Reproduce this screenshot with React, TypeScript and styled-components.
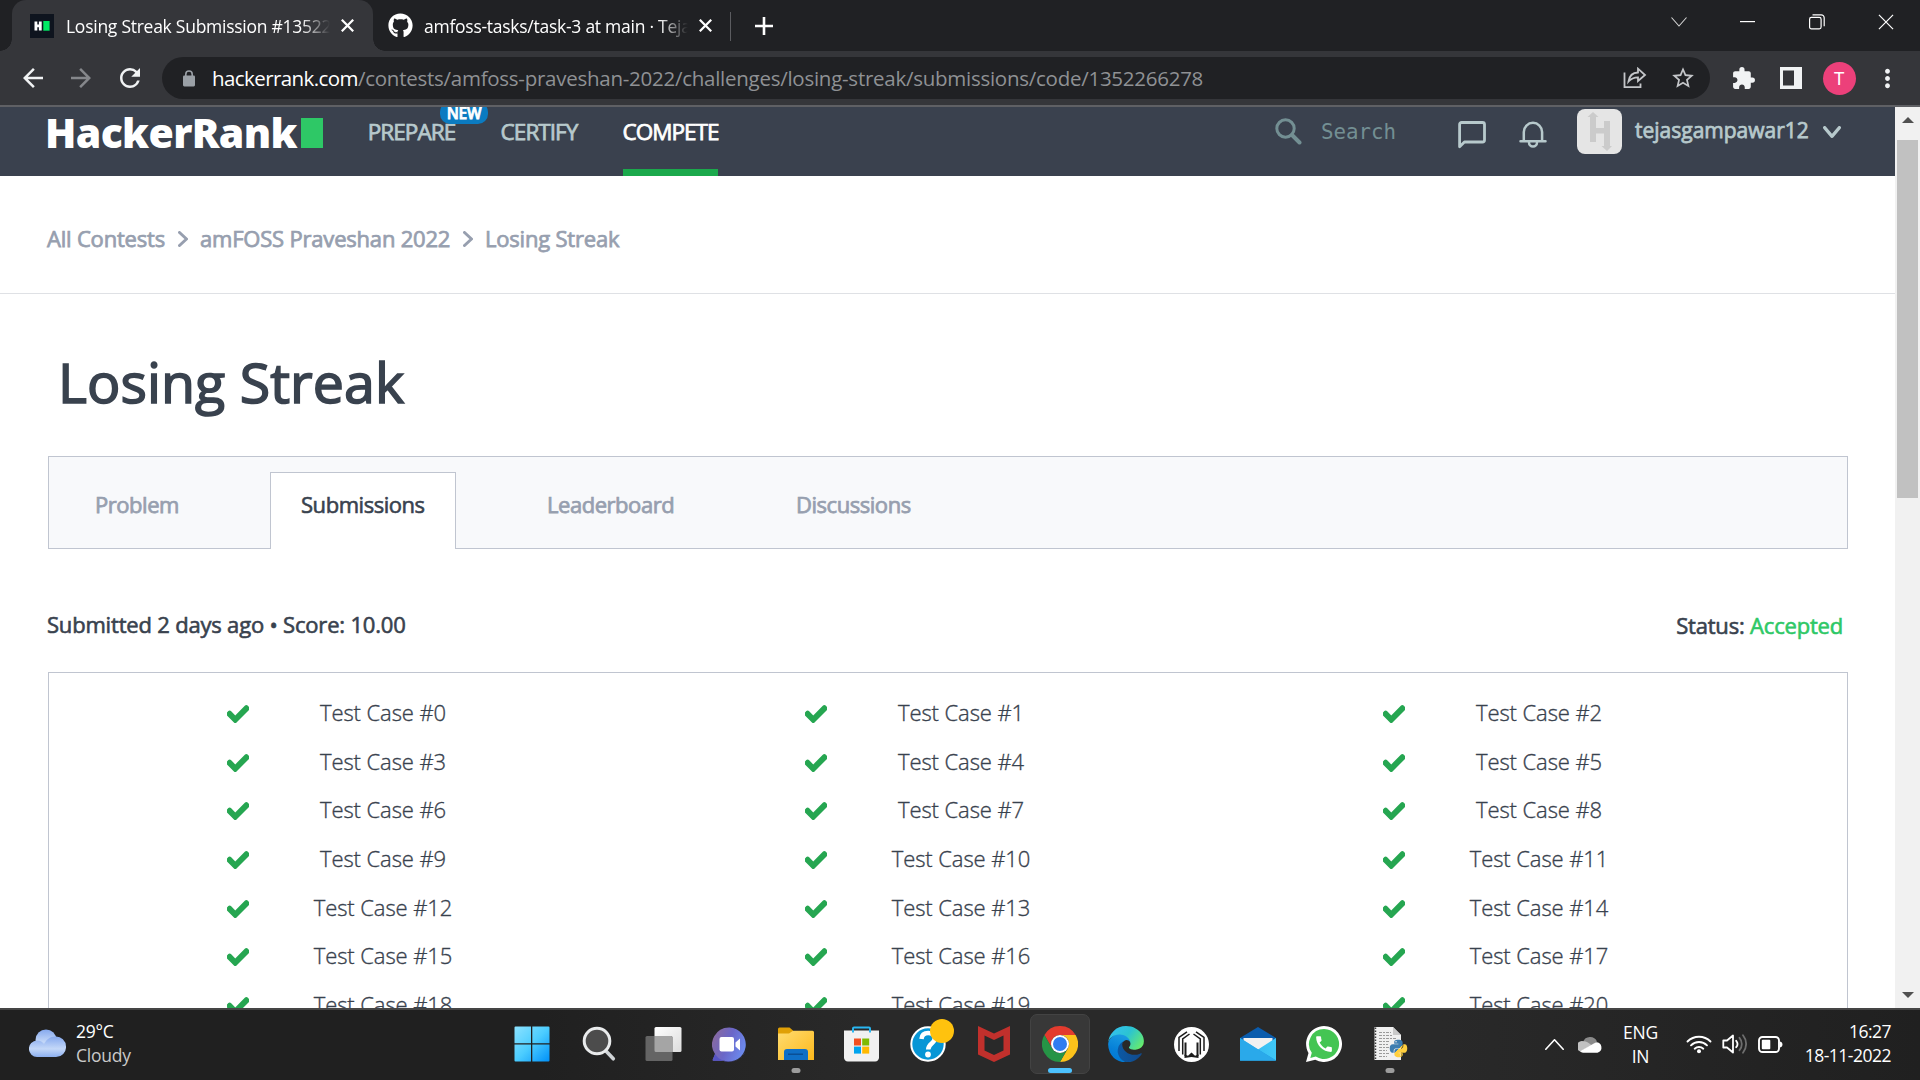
import React from 'react';
import styled, { createGlobalStyle, css } from 'styled-components';
import {
  MdArrowBack,
  MdArrowForward,
  MdCall,
  MdExtension,
  MdMoreVert,
  MdRefresh,
  MdStarBorder,
} from 'react-icons/md';
import { FaCheck, FaGithub, FaPython } from 'react-icons/fa';

const GlobalStyle = createGlobalStyle`
  * { box-sizing: border-box; }
  body {
    margin: 0;
    background: #202124;
    font-family: 'Open Sans', 'Noto Sans', sans-serif;
  }
  svg { display: block; flex: none; }
`;

const center = css`
  display: flex;
  align-items: center;
  justify-content: center;
`;

const Screen = styled.div`
  width: 1920px;
  height: 1080px;
  display: flex;
  flex-direction: column;
  overflow: hidden;
`;

/* ---------- browser chrome ---------- */

const TabStrip = styled.div`
  height: 51px;
  flex: none;
  display: flex;
  background: #202124;
  padding-left: 12px;
`;

const Tab = styled.div<{ $active?: boolean }>`
  position: relative;
  display: flex;
  align-items: center;
  width: ${(p) => (p.$active ? 361 : 357)}px;
  height: 51px;
  padding: 0 0 0 ${(p) => (p.$active ? 18 : 15)}px;
  border-radius: 14px 14px 0 0;
  background: ${(p) => (p.$active ? '#35363a' : 'transparent')};

  ${(p) =>
    p.$active &&
    css`
      &::before,
      &::after {
        content: '';
        position: absolute;
        bottom: 0;
        width: 12px;
        height: 12px;
      }
      &::before {
        left: -12px;
        background: radial-gradient(circle at 0 0, #202124 11.5px, #35363a 12px);
      }
      &::after {
        right: -12px;
        background: radial-gradient(circle at 100% 0, #202124 11.5px, #35363a 12px);
      }
    `}
`;

const Favicon = styled.div`
  ${center}
  width: 24px;
  height: 24px;
  flex: none;
`;

const TabTitle = styled.div`
  width: 264px;
  flex: none;
  margin: 0 11px 0 12px;
  overflow: hidden;
  white-space: nowrap;
  font-size: 17.5px;
  letter-spacing: -0.26px;
  line-height: 30px;
  color: #fff;
  mask-image: linear-gradient(90deg, #000 89%, transparent 100%);
`;

const TabDivider = styled.div`
  width: 1px;
  height: 29px;
  margin-top: 12px;
  background: #5b5c60;
`;

const NewTab = styled.div`
  ${center}
  width: 66px;
  height: 51px;
`;

const WindowControls = styled.div`
  display: flex;
  margin-left: auto;
  height: 43px;
`;

const WindowButton = styled.div`
  ${center}
  width: 69px;
`;

const Toolbar = styled.div`
  height: 56px;
  flex: none;
  display: flex;
  align-items: center;
  background: #35363a;
  border-bottom: 2px solid #5f6064;
  padding-left: 18px;
`;

const ToolButton = styled.div<{ $w: number; $color?: string }>`
  ${center}
  width: ${(p) => p.$w}px;
  height: 54px;
  color: ${(p) => p.$color ?? '#f1f3f4'};
`;

const Omnibox = styled.div`
  display: flex;
  align-items: center;
  width: 1548px;
  height: 42px;
  padding: 0 3px 0 21px;
  border-radius: 21px;
  background: #202124;
`;

const Url = styled.div`
  flex: 1;
  margin-left: 17px;
  white-space: nowrap;
  font-size: 20.5px;
  line-height: 30px;
  letter-spacing: -0.26px;
  color: #8f9194;
`;

const UrlHost = styled.span`
  color: #fff;
  letter-spacing: -0.58px;
`;

const ProfileBadge = styled.div`
  ${center}
  width: 33px;
  height: 33px;
  border-radius: 50%;
  background: #ec407a;
  color: #fff;
  font: 400 18px/33px Roboto, sans-serif;
`;

/* ---------- page ---------- */

const Viewport = styled.div`
  height: 901px;
  flex: none;
  display: flex;
  overflow: hidden;
  background: #fff;
`;

const Page = styled.main`
  width: 1895px;
  height: 901px;
  overflow: hidden;
`;

const SiteHeader = styled.header`
  display: flex;
  height: 69px;
  padding-left: 45px;
  background: #3a414e;
`;

const Logo = styled.div`
  display: flex;
  align-items: center;
  height: 51px;
`;

const LogoText = styled.div`
  width: 256px;
  font-size: 41px;
  font-weight: 800;
  line-height: 49px;
  letter-spacing: -0.65px;
  color: #fff;
  white-space: nowrap;
`;

const LogoBlock = styled.div`
  width: 22px;
  height: 30px;
  background: #2ec866;
`;

const Nav = styled.nav`
  display: flex;
  gap: 45px;
  margin-left: 45px;
`;

const NavItem = styled.div<{ $w: number; $active?: boolean }>`
  position: relative;
  display: flex;
  justify-content: center;
  width: ${(p) => p.$w}px;
  height: 69px;
  border-bottom: 7px solid ${(p) => (p.$active ? '#1ba94c' : 'transparent')};
  color: ${(p) => (p.$active ? '#fff' : '#b7c9cc')};
  -webkit-text-stroke: 0.75px;
  font-size: 22.5px;
  line-height: 49px;
  letter-spacing: -0.95px;
  white-space: nowrap;
`;

const NewBadge = styled.div`
  ${center}
  position: absolute;
  left: 72px;
  top: -5px;
  width: 48px;
  height: 22px;
  border-radius: 10px;
  background: #0b7bc1;
  color: #fff;
  font-size: 15.5px;
  font-weight: 600;
  letter-spacing: -0.3px;
  line-height: 22px;
`;

const HeaderTools = styled.div`
  display: flex;
  align-items: center;
  height: 49px;
  margin-left: auto;
  padding-right: 54px;
  color: #b7c9cc;
`;

const SearchBox = styled.div`
  display: flex;
  align-items: center;
  gap: 19px;
  width: 183px;
  color: #738f93;
  font: 400 20.8px/30px 'DejaVu Sans Mono', monospace;
`;

const HeaderIcon = styled.div<{ $w: number }>`
  width: ${(p) => p.$w}px;
  padding-top: 7px;
`;

const AvatarBox = styled.div`
  width: 45px;
  height: 45px;
  border-radius: 8px;
  overflow: hidden;
  background: #e5e5e5;
`;

const UserName = styled.div`
  width: 175px;
  margin: 0 13px 4px 13px;
  font-size: 21px;
  -webkit-text-stroke: 0.75px;
  line-height: 30px;
  white-space: nowrap;
`;

const Breadcrumbs = styled.div`
  display: flex;
  align-items: center;
  height: 118px;
  padding: 6px 0 0 47px;
  border-bottom: 1px solid #dfe1e5;
  color: #979faf;
  font-size: 22px;
  line-height: 32px;
  letter-spacing: -0.2px;
`;

const Crumb = styled.div<{ $w: number }>`
  width: ${(p) => p.$w}px;
  -webkit-text-stroke: 0.75px;
  white-space: nowrap;
`;

const CrumbArrow = styled.div`
  ${center}
  width: 35px;
  height: 20px;
  padding-top: 2px;
`;

const Title = styled.h1`
  margin: 50px 0 0 58px;
  font-size: 55.5px;
  font-weight: 400;
  line-height: 76px;
  letter-spacing: 0.05px;
  color: #39424e;
  -webkit-text-stroke: 1.6px;
`;

const TabBar = styled.div`
  display: flex;
  align-items: flex-end;
  width: 1800px;
  height: 93px;
  margin: 36px 0 0 48px;
  border: 1px solid #c0c5d0;
  background: #f8f9fb;
`;

const SectionTab = styled.div<{ $w: number; $active?: boolean; $shift?: number }>`
  width: ${(p) => p.$w}px;
  height: ${(p) => (p.$active ? 77 : 76)}px;
  margin-bottom: ${(p) => (p.$active ? -1 : 0)}px;
  padding-left: ${(p) => p.$shift ?? 0}px;
  border: ${(p) => (p.$active ? '1px solid #c0c5d0' : '0 solid transparent')};
  border-bottom: 0;
  background: ${(p) => (p.$active ? '#fff' : 'transparent')};
  color: ${(p) => (p.$active ? '#39424e' : '#979faf')};
  -webkit-text-stroke: ${(p) => (p.$active ? 0.6 : 0.75)}px;
  font-size: 22px;
  line-height: ${(p) => (p.$active ? 62 : 64)}px;
  letter-spacing: -0.46px;
  white-space: nowrap;
`;

const Summary = styled.div`
  display: flex;
  justify-content: space-between;
  width: 1796px;
  margin: 58px 0 0 47px;
  color: #39424e;
  font-size: 22px;
  line-height: 34px;
  letter-spacing: -0.19px;
  -webkit-text-stroke: 0.6px;
`;

const StatusText = styled.div`
  padding-top: 1px;
`;

const Accepted = styled.span`
  color: #2ec866;
`;

const Results = styled.div`
  display: grid;
  grid-template-columns: repeat(3, 578px);
  grid-auto-rows: 48.6px;
  width: 1800px;
  height: 420px;
  margin: 30px 0 0 48px;
  padding: 15px 33px;
  border: 1px solid #c0c5d0;
`;

const TestCase = styled.div`
  display: grid;
  grid-template-columns: 100px 190px;
  align-items: center;
  padding-left: 106px;
  color: #39424e;
`;

const CheckCell = styled.div`
  ${center}
  padding-top: 4px;
  color: #26a651;
`;

const CaseName = styled.div`
  text-align: center;
  font-size: 22px;
  font-weight: 300;
  line-height: 32px;
  letter-spacing: -0.08px;
  -webkit-text-stroke: 0.35px;
`;

const ScrollTrack = styled.div`
  display: flex;
  flex-direction: column;
  align-items: center;
  justify-content: space-between;
  width: 25px;
  height: 901px;
  background: #f1f1f1;
`;

const ScrollArrow = styled.div`
  ${center}
  width: 25px;
  height: 26px;
`;

const ScrollThumb = styled.div`
  width: 21px;
  height: 358px;
  margin: 7px 0 auto;
  background: #c1c1c1;
`;

/* ---------- taskbar ---------- */

const Taskbar = styled.div`
  display: grid;
  grid-template-columns: 498.5px 924px 1fr;
  height: 72px;
  flex: none;
  box-shadow: inset 0 2px #454545;
  background: linear-gradient(90deg, #202020 0, #202020 28%, #292929 45%, #292929 75%, #202020 100%);
  color: #fff;
`;

const Weather = styled.div`
  display: flex;
  align-items: center;
  gap: 10px;
  padding: 0 0 2px 29px;
`;

const TwoLines = styled.div<{ $align?: string }>`
  text-align: ${(p) => p.$align ?? 'left'};
  font-size: 17.5px;
  line-height: 24px;
  letter-spacing: ${(p) => (p.$align === 'right' ? -0.5 : -0.25)}px;
  white-space: nowrap;
`;

const Muted = styled.div`
  color: #c9c9c9;
`;

const Apps = styled.div`
  display: flex;
  align-items: center;
`;

const AppSlot = styled.div<{ $active?: boolean }>`
  ${center}
  position: relative;
  width: 60px;
  height: 60px;
  margin: 0 3px;
  border-radius: 7px;
  border: 1px solid ${(p) => (p.$active ? '#434343' : 'transparent')};
  background: ${(p) => (p.$active ? '#383838' : 'transparent')};
`;

const Indicator = styled.div<{ $active?: boolean }>`
  position: absolute;
  bottom: 0;
  left: 50%;
  transform: translateX(-50%);
  width: ${(p) => (p.$active ? 24 : 9)}px;
  height: 5px;
  border-radius: 3px;
  background: ${(p) => (p.$active ? '#4cc2ff' : '#9c9c9c')};
`;

const Tray = styled.div`
  display: flex;
  align-items: center;
  padding-left: 122px;
`;

const TrayItem = styled.div<{ $w: number; $gap?: number }>`
  ${center}
  width: ${(p) => p.$w}px;
  margin-right: ${(p) => p.$gap ?? 0}px;
`;

const Clock = styled.div`
  margin-left: auto;
  padding: 0 29px 2px 0;
`;

/* ---------- drawings ---------- */

const CloseGlyph = ({ size, width, color = '#fff' }: { size: number; width: number; color?: string }) => (
  <svg width={size} height={size} viewBox="0 0 12 12" stroke={color} strokeWidth={width} fill="none">
    <path d="M.7.7 11.3 11.3M11.3.7.7 11.3" />
  </svg>
);

const HackerRankIcon = () => (
  <svg width="24" height="24" viewBox="0 0 24 24">
    <path fill="#0e141e" d="M0 0h24v24H0z" />
    <path fill="#fff" d="M4.5 7.5h2.8V10.600h1.600V7.500h2.800v9H8.900V13.200H7.300v3.300H4.500z" />
    <path fill="#00ea64" d="M13.300 7h6.300v9.700h-6.300z" />
  </svg>
);

const LockIcon = () => (
  <svg width="12" height="17" viewBox="0 0 12 17">
    <path fill="none" stroke="#9aa0a6" strokeWidth="1.600" d="M2.800 7V4.200a3.200 3.200 0 0 1 6.400 0V7" />
    <rect y="5.600" width="12" height="10.800" rx="1.300" fill="#9aa0a6" />
  </svg>
);

const ShareIcon = () => (
  <svg width="24" height="22" viewBox="0 0 24 22" fill="none" stroke="#c4c6c9" strokeWidth="1.800">
    <path d="M1.500 5.500V20.200H17.500V16.500" />
    <path d="M5.500 14.500C6.300 9 9.500 5.700 15 5.500V1.700L22 8 15 14V10.300C11 10.300 8 11.500 5.500 14.500Z" />
  </svg>
);

const PanelIcon = () => (
  <svg width="22" height="22" viewBox="0 0 22 22">
    <path fill="#f1f3f4" fillRule="evenodd" d="M0 0h22v22H0zM3 3.500v15h11v-15z" />
  </svg>
);

const RestoreIcon = () => (
  <svg width="16" height="16" viewBox="0 0 16 16" fill="none" stroke="#fff" strokeWidth="1.200">
    <rect x=".6" y="3.400" width="11.500" height="11.500" rx="1.800" />
    <path d="M3.500.8h8.700a3 3 0 0 1 3 3v8.500" />
  </svg>
);

const SearchIcon = () => (
  <svg width="27" height="27" viewBox="0 0 27 27" fill="none" stroke="#738f93">
    <circle cx="10.500" cy="10.500" r="8.700" strokeWidth="3" />
    <path d="M17 17l7.500 7.500" strokeWidth="4" strokeLinecap="round" />
  </svg>
);

const ChatIcon = () => (
  <svg width="28" height="28" viewBox="0 0 28 28" fill="none" stroke="#b7c9cc" strokeWidth="2.800" strokeLinejoin="round">
    <path d="M1.600 25.800V3.500a2 2 0 0 1 2-2H24.500a2 2 0 0 1 2 2V19a2 2 0 0 1-2 2H6.400Z" />
  </svg>
);

const BellIcon = () => (
  <svg width="28" height="28" viewBox="0 0 28 28" fill="none" stroke="#b7c9cc" strokeWidth="2.500" strokeLinecap="round" strokeLinejoin="round">
    <path d="M1.500 20.300H26.500M4.800 20V11a9 9 0 0 1 18.300 0v9" />
    <path d="M10 21.500a4 4 0 0 0 8 0" />
  </svg>
);

const AvatarArt = () => (
  <svg width="45" height="45" viewBox="0 0 45 45" fill="#cbcbcb">
    <path d="M13 8H10.500L16 3l5.500 5H19v11h8v-7h6v25h2l-5 5-5.500-5H27V24.500h-8V33h-6z" />
  </svg>
);

const Chevron = ({ w, h, sw, dir }: { w: number; h: number; sw: number; dir: 'up' | 'down' | 'right' }) => {
  const d = {
    up: `M${sw / 2} ${h - sw / 2}L${w / 2} ${sw / 2} ${w - sw / 2} ${h - sw / 2}`,
    down: `M${sw / 2} ${sw / 2}L${w / 2} ${h - sw / 2} ${w - sw / 2} ${sw / 2}`,
    right: `M${sw / 2} ${sw / 2}L${w - sw / 2} ${h / 2} ${sw / 2} ${h - sw / 2}`,
  }[dir];
  return (
    <svg width={w} height={h} viewBox={`0 0 ${w} ${h}`} fill="none" stroke="currentColor" strokeWidth={sw} strokeLinecap="round" strokeLinejoin="round">
      <path d={d} />
    </svg>
  );
};

const WeatherIcon = () => (
  <svg width="37" height="28" viewBox="0 0 37 28">
    <defs>
      <linearGradient id="cloud" x1="0" y1="0" x2="0" y2="1">
        <stop offset="0" stopColor="#86a9ee" />
        <stop offset=".6" stopColor="#c4d8f8" />
        <stop offset="1" stopColor="#8db0f0" />
      </linearGradient>
    </defs>
    <circle cx="17" cy="11" r="10.500" fill="url(#cloud)" />
    <path fill="url(#cloud)" d="M8 11.500c4 0 6 2 7 4 2-5 6-8 11.500-8A10 10 0 0 1 37 17.500 10 10 0 0 1 27 28H8.300a8.200 8.200 0 0 1-.3-16.500z" />
  </svg>
);

const StartIcon = () => (
  <svg width="36" height="36" viewBox="0 0 36 36">
    <defs>
      <linearGradient id="win" x1="0" y1="0" x2="1" y2="1">
        <stop offset="0" stopColor="#8ce2ff" />
        <stop offset=".5" stopColor="#4ccdff" />
        <stop offset="1" stopColor="#0090f8" />
      </linearGradient>
    </defs>
    <path fill="url(#win)" d="M1.500.5H17v16.700H.5V1.500a1 1 0 0 1 1-1zM18.300.5H34.500a1 1 0 0 1 1 1V17.200H18.300zM.5 18.500H17V35.500H1.500a1 1 0 0 1-1-1zM18.300 18.500H35.500V34.500a1 1 0 0 1-1 1H18.300z" />
  </svg>
);

const FindIcon = () => (
  <svg width="32" height="36" viewBox="0 0 32 36" fill="none" overflow="visible">
    <path d="M23 24l8.300 8.800" stroke="#cfd3d6" strokeWidth="3.600" strokeLinecap="round" />
    <circle cx="15" cy="15" r="12.800" fill="#4c4c4c" stroke="#e9ebec" strokeWidth="3" />
  </svg>
);

const TaskViewIcon = () => (
  <svg width="37" height="35" viewBox="0 0 37 35">
    <defs>
      <linearGradient id="tv" x1="0" y1="0" x2="1" y2="1">
        <stop offset="0" stopColor="#fff" />
        <stop offset="1" stopColor="#dcdcdc" />
      </linearGradient>
    </defs>
    <rect x="9.500" y="0" width="27" height="25" rx="1.500" fill="url(#tv)" />
    <rect x=".5" y="9" width="27" height="25" rx="1.500" fill="#646464" />
    <path fill="#a5a5a5" d="M9.500 9H26a1.500 1.500 0 0 1 1.500 1.500V25H11a1.500 1.500 0 0 1-1.500-1.500z" />
  </svg>
);

const MeetIcon = () => (
  <svg width="35" height="35" viewBox="0 0 35 35">
    <defs>
      <linearGradient id="meet" x1="0" y1=".2" x2="1" y2=".6">
        <stop offset="0" stopColor="#8b6a9c" />
        <stop offset=".5" stopColor="#6a66c8" />
        <stop offset="1" stopColor="#6c8cf0" />
      </linearGradient>
    </defs>
    <path fill="url(#meet)" d="M17.500.5a17 17 0 1 1-5.500 33.300H1.500a1 1 0 0 1-.6-1.500L3 27A17 17 0 0 1 17.500.5z" />
    <path fill="#5654c4" d="M3 27a17 17 0 0 0 31-5 17 17 0 0 1-22 11.800H1.500a1 1 0 0 1-.6-1.500z" />
    <rect x="7.500" y="10" width="14.500" height="14.500" rx="2" fill="#fff" />
    <path fill="#fff" d="M23.500 15.500l4.500-4v12l-4.500-4z" />
  </svg>
);

const FolderIcon = () => (
  <svg width="36" height="34" viewBox="0 0 36 34">
    <defs>
      <linearGradient id="fold" x1="0" y1="0" x2="1" y2="1">
        <stop offset="0" stopColor="#ffdc70" />
        <stop offset="1" stopColor="#fcb81b" />
      </linearGradient>
    </defs>
    <path fill="#e0a006" d="M0 2a1.500 1.500 0 0 1 1.500-1.500H11.500L15 3.500V8H0z" />
    <path fill="url(#fold)" d="M0 6.500H11L15 3.700H34.500A1.500 1.500 0 0 1 36 5.200V33H0z" />
    <path fill="#0f6fc6" d="M6 33V25a3 3 0 0 1 3-3H27a3 3 0 0 1 3 3v8z" />
    <path fill="#0a4f95" d="M10 26.500h15v1.500H10z" />
  </svg>
);

const StoreIcon = () => (
  <svg width="35" height="36" viewBox="0 0 35 36">
    <path fill="none" stroke="#29b6f1" strokeWidth="2" d="M9 8V2.500A1 1 0 0 1 10 1.500H25a1 1 0 0 1 1 1V8" />
    <path fill="#f1f1f1" d="M0 4.500H35V31a4 4 0 0 1-4 4.500H4A4 4 0 0 1 0 31z" />
    <path fill="none" stroke="#29b6f1" strokeWidth="2" d="M9 4v2.500M26 4v2.500" />
    <path fill="#f25022" d="M10 12.500h7v7h-7z" />
    <path fill="#7fba00" d="M18.200 12.500h7v7h-7z" />
    <path fill="#00a4ef" d="M10 20.600h7v7h-7z" />
    <path fill="#ffb900" d="M18.200 20.600h7v7h-7z" />
  </svg>
);

const HelpIcon = () => (
  <svg width="36" height="36" viewBox="0 0 36 36" overflow="visible">
    <circle cx="18" cy="18" r="16.700" fill="#0796d6" stroke="#fff" strokeWidth="2" />
    <path fill="none" stroke="#fff" strokeWidth="4.500" d="M11.500 13c.3-4 3-6 6.700-6s6.500 2.300 6.500 5.500c0 5-6.500 5-6.500 11" />
    <circle cx="18" cy="28.500" r="2.900" fill="#fff" />
    <circle cx="32" cy="5" r="12" fill="#ffc20e" />
  </svg>
);

const McAfeeIcon = () => (
  <svg width="34" height="36" viewBox="0 0 34 36">
    <path fill="#c1302c" fillRule="evenodd" d="M1 0l16 7.500L33 0v28.500L17 36 1 28.500zM7.500 9.500V24.500L17 29l9.500-4.500V9.500L17 14z" />
  </svg>
);

const ChromeIcon = () => (
  <svg width="36" height="36" viewBox="0 0 36 36">
    <path fill="#e33b2e" d="M2.410 9A18 18 0 0 1 33.590 9H18a9 9 0 0 0-7.800 13.500z" />
    <path fill="#fcc21b" d="M33.590 9A18 18 0 0 1 18 36l7.800-13.500A9 9 0 0 0 18 9z" />
    <path fill="#269446" d="M18 36A18 18 0 0 1 2.410 9L10.200 22.500a9 9 0 0 0 15.600 0z" />
    <circle cx="18" cy="18" r="9" fill="#fff" />
    <circle cx="18" cy="18" r="7" fill="#2f7cf0" />
  </svg>
);

const EdgeIcon = () => (
  <svg width="36" height="36" viewBox="0 0 256 258">
    <defs>
      <linearGradient id="e1" x1="0" y1="0" x2="1" y2="0">
        <stop offset="0" stopColor="#0c59a4" />
        <stop offset="1" stopColor="#114a8b" />
      </linearGradient>
      <linearGradient id="e2" x1=".6" y1="0" x2=".3" y2="1">
        <stop offset="0" stopColor="#1b9de2" />
        <stop offset=".6" stopColor="#0680d7" />
        <stop offset="1" stopColor="#0078d4" />
      </linearGradient>
      <linearGradient id="e3" x1="0" y1=".2" x2="1" y2=".7">
        <stop offset="0" stopColor="#35c1f1" />
        <stop offset=".5" stopColor="#2bc3d2" />
        <stop offset="1" stopColor="#66eb6e" />
      </linearGradient>
    </defs>
    <path fill="url(#e1)" d="M235.680 195.460a93.730 93.730 0 0 1-10.540 4.710 101.870 101.870 0 0 1-35.900 6.460c-47.320 0-88.540-32.550-88.540-74.320A31.480 31.480 0 0 1 117.130 105c-42.800 1.800-53.800 46.400-53.800 72.530 0 73.880 68.090 81.370 82.760 81.370 7.910 0 19.840-2.300 27-4.560l1.310-.44A128.340 128.340 0 0 0 241 201.100a4 4 0 0 0-5.320-5.640z" />
    <path fill="url(#e2)" d="M105.730 246.630A79.210 79.210 0 0 1 83 225.300 80.720 80.720 0 0 1 117.130 105c3.120-1.470 8.450-4.130 15.540-4a32.350 32.350 0 0 1 25.690 13 31.880 31.880 0 0 1 6.360 18.660c0-.21 24.460-79.600-80-79.600-43.900 0-84.720 41.660-84.720 78.210a130.150 130.150 0 0 0 12.110 56 128 128 0 0 0 156.380 67.110 75.550 75.550 0 0 1-62.780-8z" />
    <path fill="url(#e3)" d="M152.330 148.860c-.81 1.050-3.300 2.500-3.300 5.660 0 2.610 1.700 5.120 4.720 7.230 14.380 10 41.490 8.680 41.560 8.680a59.560 59.560 0 0 0 30.270-8.350A61.380 61.380 0 0 0 256 109.250c.26-22.410-8-37.310-11.340-43.910C223.460 23.840 177.720 0 128 0A128 128 0 0 0 0 126.200c.48-36.540 36.800-66.050 80-66.050 3.500 0 23.460.34 42 10.070 16.340 8.580 24.900 18.940 30.850 29.210 6.180 10.670 7.280 24.150 7.280 29.520s-2.740 13.330-7.800 19.910z" />
  </svg>
);

const ArchIcon = () => (
  <svg width="35" height="35" viewBox="0 0 35 35" fill="none" stroke="#1c1c1c" strokeWidth="1.500">
    <circle cx="17.500" cy="17.500" r="17.500" fill="#fff" stroke="none" />
    <path d="M13 4.800L5 10.500V24M22 4.800l8 5.700V24" />
    <path d="M15.500 7L8.700 11.800V27.500M19.500 7l6.800 4.800V27.500" />
    <path strokeWidth="2" d="M11.500 29V15.500M23.500 29V15.500" />
    <path fill="#1c1c1c" stroke="none" d="M10.500 31V27.500L14 28.800 17.500 25.500l3.500 3.300 3.500-1.300V31L17.500 30z" />
  </svg>
);

const MailIcon = () => (
  <svg width="36" height="34" viewBox="0 0 36 34">
    <defs>
      <linearGradient id="ml" x1="0" y1="0" x2="1" y2="0">
        <stop offset="0" stopColor="#2fb4f0" />
        <stop offset="1" stopColor="#40c8f6" />
      </linearGradient>
    </defs>
    <path fill="#0a5cad" d="M0 11L18 0l18 11v3H0z" />
    <path fill="#f1f1f1" d="M3.500 11h29v8L18 24 3.500 19z" />
    <path fill="url(#ml)" d="M0 11l18 11.500L36 11v22.500H0z" />
    <path fill="#1a92dc" d="M0 33.500L18 22.500l18 11z" />
    <path fill="#2aa9ea" d="M0 11l36 22.500H0z" />
  </svg>
);

const WhatsAppIcon = () => (
  <svg width="36" height="36" viewBox="0 0 36 36">
    <path fill="#fff" d="M18 0a18 18 0 1 1-8.800 33.700L0 36l2.500-9A18 18 0 0 1 18 0z" />
    <path fill="#44c553" d="M18 3a15 15 0 1 1-8.200 27.500L4.300 32l1.500-5.300A15 15 0 0 1 18 3z" />
    <MdCall x="7.500" y="7.500" size={21} color="#fff" />
  </svg>
);

const PythonFileIcon = () => (
  <svg width="33" height="36" viewBox="0 0 33 36" overflow="visible">
    <defs>
      <linearGradient id="py" x1="0" y1="0" x2="1" y2="1">
        <stop offset=".5" stopColor="#3c7cb0" />
        <stop offset=".5" stopColor="#ffcf3e" />
      </linearGradient>
    </defs>
    <path fill="#f0f0f0" d="M1.500 1H20l8 8v25H1.500z" />
    <path fill="#c9c9c9" d="M20 1v8h8z" />
    <path stroke="#9a9a9a" strokeDasharray="3 1 2 1" d="M6 6.500h12M6 9.500h14M6 12.500h18M6 15.500h11M6 18.500h9M6 21.500h10M6 24.500h8M6 27.500h10M6 30.500h8" />
    <path stroke="#3a3a3a" strokeWidth="1.500" strokeDasharray="1.500 1.500" d="M2.500 1.500V34" />
    <FaPython x="15.500" y="12.500" size={20} fill="url(#py)" />
  </svg>
);

const OneDriveIcon = () => (
  <svg width="25" height="17" viewBox="0 0 25 17">
    <path fill="#8b8b8b" d="M5 6a7.500 7.500 0 0 1 14-.5L13 10z" />
    <path fill="#c2c2c2" d="M5.500 5.200c3 0 5 1.500 8 4L2.500 15.500A5.300 5.300 0 0 1 5.500 5.200z" />
    <path fill="#fff" d="M2 15.200L18 6.200a5.400 5.400 0 0 1 1.500 10.600H5A5 5 0 0 1 2 15.200z" />
  </svg>
);

const WifiIcon = () => (
  <svg width="26" height="20" viewBox="0 0 26 20" fill="none" stroke="#fff" strokeWidth="1.900" strokeLinecap="round">
    <path d="M1.500 7.500a16.200 16.200 0 0 1 23 0M5 11.300a11.300 11.300 0 0 1 16 0M8.700 14.700a6.200 6.200 0 0 1 8.600 0" />
    <circle cx="13" cy="17.300" r="2" fill="#fff" stroke="none" />
  </svg>
);

const SpeakerIcon = () => (
  <svg width="25" height="20" viewBox="0 0 25 20" fill="none" strokeWidth="1.800" strokeLinecap="round" strokeLinejoin="round">
    <path stroke="#fff" d="M1.300 6.500H5l6-5v17l-6-5H1.300zM14.200 6.800a5 5 0 0 1 0 6.400" />
    <path stroke="#6e6e6e" d="M17.500 3.800a9.500 9.500 0 0 1 0 12.400M21 1.200a14 14 0 0 1 0 17.600" />
  </svg>
);

const BatteryIcon = () => (
  <svg width="25" height="17" viewBox="0 0 25 17" fill="none">
    <rect x="1" y="1" width="20" height="15" rx="3.500" stroke="#fff" strokeWidth="1.900" />
    <rect x="3.800" y="3.800" width="8.500" height="9.400" rx="1" fill="#fff" />
    <path fill="#fff" d="M22 5.500c3.300.5 3.300 5.500 0 6z" />
  </svg>
);

const apps: { name: string; icon: React.ReactNode; state?: 'open' | 'active' }[] = [
  { name: 'start', icon: <StartIcon /> },
  { name: 'search', icon: <FindIcon /> },
  { name: 'taskview', icon: <TaskViewIcon /> },
  { name: 'meet', icon: <MeetIcon /> },
  { name: 'files', icon: <FolderIcon />, state: 'open' },
  { name: 'store', icon: <StoreIcon /> },
  { name: 'help', icon: <HelpIcon /> },
  { name: 'mcafee', icon: <McAfeeIcon /> },
  { name: 'chrome', icon: <ChromeIcon />, state: 'active' },
  { name: 'edge', icon: <EdgeIcon /> },
  { name: 'arch', icon: <ArchIcon /> },
  { name: 'mail', icon: <MailIcon /> },
  { name: 'whatsapp', icon: <WhatsAppIcon /> },
  { name: 'python', icon: <PythonFileIcon />, state: 'open' },
];

const testCases = Array.from({ length: 21 }, (_, i) => i);

export default function App() {
  return (
    <Screen>
      <GlobalStyle />
      <TabStrip>
        <Tab $active>
          <Favicon>
            <HackerRankIcon />
          </Favicon>
          <TabTitle>Losing Streak Submission #1352266278</TabTitle>
          <CloseGlyph size={13} width={2.1} />
        </Tab>
        <Tab>
          <Favicon>
            <FaGithub size={25} color="#fff" />
          </Favicon>
          <TabTitle>amfoss-tasks/task-3 at main · Tejas</TabTitle>
          <CloseGlyph size={13} width={2.1} />
        </Tab>
        <TabDivider />
        <NewTab>
          <svg width="18" height="18" viewBox="0 0 18 18" stroke="#fff" strokeWidth="2.600">
            <path d="M9 0v18M0 9h18" />
          </svg>
        </NewTab>
        <WindowControls>
          <WindowButton>
            <svg width="16" height="10" viewBox="0 0 16 10" fill="none" stroke="#d5d5d5" strokeWidth="1.100">
              <path d="M.5.5 8 9 15.500.5" />
            </svg>
          </WindowButton>
          <WindowButton>
            <svg width="15" height="2" viewBox="0 0 15 2">
              <path fill="#fff" d="M0 0h15v1.200H0z" />
            </svg>
          </WindowButton>
          <WindowButton>
            <RestoreIcon />
          </WindowButton>
          <WindowButton>
            <CloseGlyph size={16} width={0.9} />
          </WindowButton>
        </WindowControls>
      </TabStrip>

      <Toolbar>
        <ToolButton $w={30}>
          <MdArrowBack size={30} />
        </ToolButton>
        <ToolButton $w={66} $color="#85878b">
          <MdArrowForward size={30} />
        </ToolButton>
        <ToolButton $w={31}>
          <MdRefresh size={30} />
        </ToolButton>
        <ToolButton $w={17} />
        <Omnibox>
          <LockIcon />
          <Url>
            <UrlHost>hackerrank.com</UrlHost>
            /contests/amfoss-praveshan-2022/challenges/losing-streak/submissions/code/1352266278
          </Url>
          <ToolButton $w={48}>
            <ShareIcon />
          </ToolButton>
          <ToolButton $w={48} $color="#c4c6c9">
            <MdStarBorder size={26} />
          </ToolButton>
        </Omnibox>
        <ToolButton $w={66}>
          <MdExtension size={25} />
        </ToolButton>
        <ToolButton $w={30}>
          <PanelIcon />
        </ToolButton>
        <ToolButton $w={66}>
          <ProfileBadge>T</ProfileBadge>
        </ToolButton>
        <ToolButton $w={30}>
          <MdMoreVert size={29} />
        </ToolButton>
      </Toolbar>

      <Viewport>
        <Page>
          <SiteHeader>
            <Logo>
              <LogoText>HackerRank</LogoText>
              <LogoBlock />
            </Logo>
            <Nav>
              <NavItem $w={87}>
                PREPARE
                <NewBadge>NEW</NewBadge>
              </NavItem>
              <NavItem $w={78}>CERTIFY</NavItem>
              <NavItem $w={95} $active>
                COMPETE
              </NavItem>
            </Nav>
            <HeaderTools>
              <SearchBox>
                <SearchIcon />
                Search
              </SearchBox>
              <HeaderIcon $w={61}>
                <ChatIcon />
              </HeaderIcon>
              <HeaderIcon $w={58}>
                <BellIcon />
              </HeaderIcon>
              <AvatarBox>
                <AvatarArt />
              </AvatarBox>
              <UserName>tejasgampawar12</UserName>
              <Chevron w={18} h={12} sw={3.2} dir="down" />
            </HeaderTools>
          </SiteHeader>

          <Breadcrumbs>
            <Crumb $w={118}>All Contests</Crumb>
            <CrumbArrow>
              <Chevron w={10} h={16} sw={3} dir="right" />
            </CrumbArrow>
            <Crumb $w={250}>amFOSS Praveshan 2022</Crumb>
            <CrumbArrow>
              <Chevron w={10} h={16} sw={3} dir="right" />
            </CrumbArrow>
            <Crumb $w={136}>Losing Streak</Crumb>
          </Breadcrumbs>

          <Title>Losing Streak</Title>

          <TabBar>
            <SectionTab $w={221} $shift={46}>
              Problem
            </SectionTab>
            <SectionTab $w={186} $shift={30} $active>
              Submissions
            </SectionTab>
            <SectionTab $w={249} $shift={91}>
              Leaderboard
            </SectionTab>
            <SectionTab $w={249} $shift={91}>
              Discussions
            </SectionTab>
          </TabBar>

          <Summary>
            <div>Submitted 2 days ago • Score: 10.00</div>
            <StatusText>
              Status: <Accepted>Accepted</Accepted>
            </StatusText>
          </Summary>

          <Results>
            {testCases.map((n) => (
              <TestCase key={n}>
                <CheckCell>
                  <FaCheck size={22} stroke="currentColor" strokeWidth={34} strokeLinejoin="round" />
                </CheckCell>
                <CaseName>Test Case #{n}</CaseName>
              </TestCase>
            ))}
          </Results>
        </Page>
        <ScrollTrack>
          <ScrollArrow>
            <svg width="12" height="6" viewBox="0 0 12 6">
              <path fill="#505050" d="M0 6L6 0l6 6z" />
            </svg>
          </ScrollArrow>
          <ScrollThumb />
          <ScrollArrow>
            <svg width="12" height="6" viewBox="0 0 12 6">
              <path fill="#505050" d="M0 0l6 6 6-6z" />
            </svg>
          </ScrollArrow>
        </ScrollTrack>
      </Viewport>

      <Taskbar>
        <Weather>
          <WeatherIcon />
          <TwoLines>
            29°C
            <Muted>Cloudy</Muted>
          </TwoLines>
        </Weather>
        <Apps>
          {apps.map((app) => (
            <AppSlot key={app.name} $active={app.state === 'active'}>
              {app.icon}
              {app.state && <Indicator $active={app.state === 'active'} />}
            </AppSlot>
          ))}
        </Apps>
        <Tray>
          <Chevron w={19} h={11} sw={1.6} dir="up" />
          <TrayItem $w={54}>
            <OneDriveIcon />
          </TrayItem>
          <TrayItem $w={46} $gap={17}>
            <TwoLines $align="center">
              ENG
              <br />
              IN
            </TwoLines>
          </TrayItem>
          <TrayItem $w={36}>
            <WifiIcon />
          </TrayItem>
          <TrayItem $w={36}>
            <SpeakerIcon />
          </TrayItem>
          <TrayItem $w={36}>
            <BatteryIcon />
          </TrayItem>
          <Clock>
            <TwoLines $align="right">
              16:27
              <br />
              18-11-2022
            </TwoLines>
          </Clock>
        </Tray>
      </Taskbar>
    </Screen>
  );
}
